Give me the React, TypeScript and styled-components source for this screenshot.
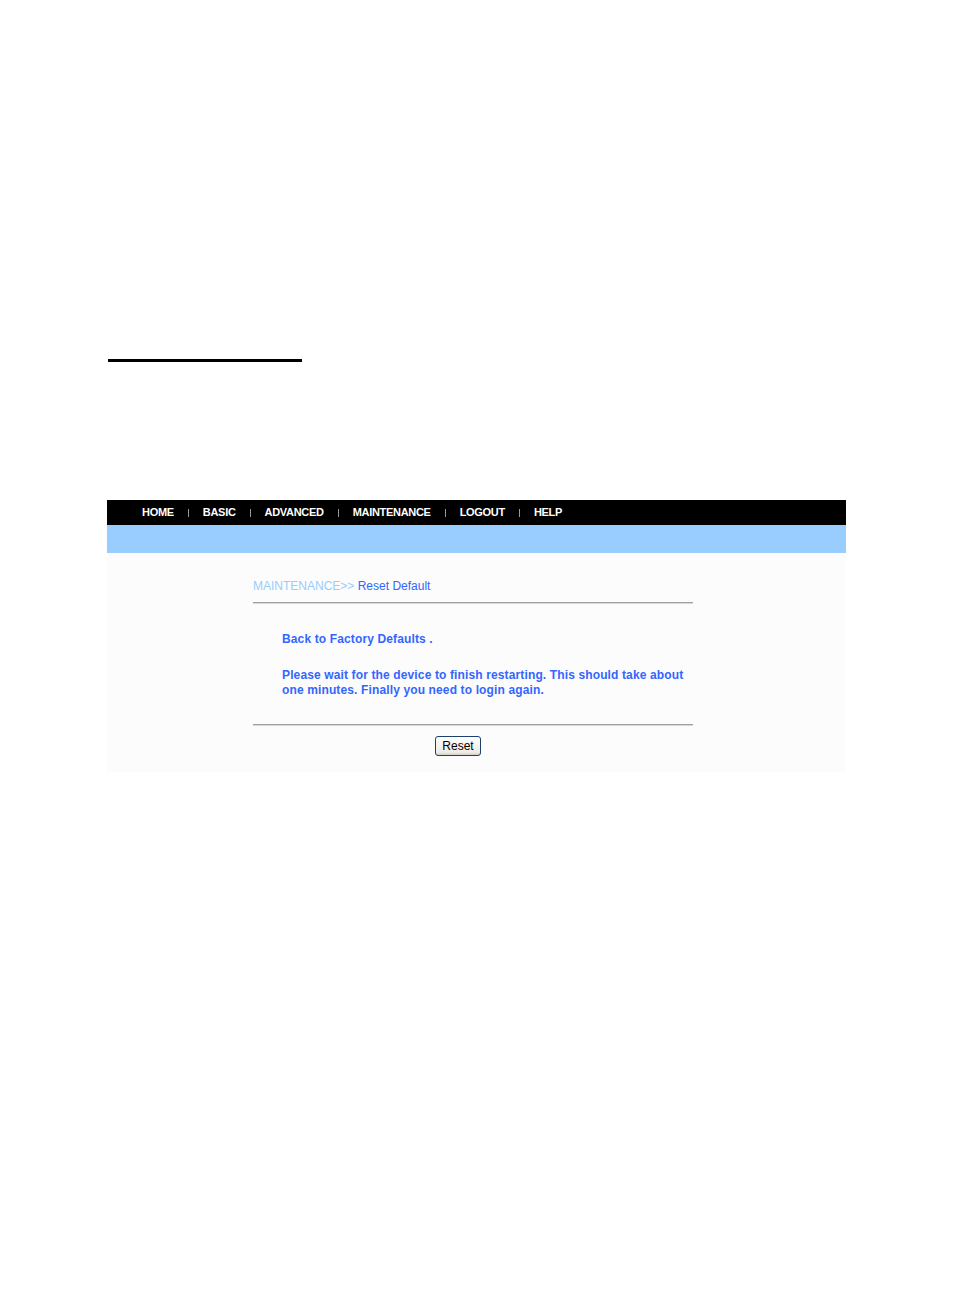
import { FunctionComponent, Fragment } from "react";
import styled, { createGlobalStyle } from "styled-components";

const GlobalStyle = createGlobalStyle`
  html, body {
    margin: 0;
    padding: 0;
    background: #ffffff;
  }
  body {
    font-family: "Liberation Sans", Arial, sans-serif;
  }
`;

const navItems = ["HOME", "BASIC", "ADVANCED", "MAINTENANCE", "LOGOUT", "HELP"];

const Page = styled.div`
  width: 954px;
  min-height: 1311px;
  padding-top: 359px;
  box-sizing: border-box;
`;

const TopRule = styled.div`
  width: 194px;
  height: 3px;
  margin-left: 108px;
  background: #000000;
`;

const Panel = styled.div`
  width: 739px;
  margin: 138px 0 0 107px;
  background: #fcfcfc;
`;

const NavBar = styled.nav`
  display: flex;
  align-items: center;
  height: 25px;
  padding-left: 35px;
  background: #000000;
`;

const NavLink = styled.a`
  color: #ffffff;
  font-size: 11px;
  font-weight: bold;
  letter-spacing: -0.3px;
  text-decoration: none;
  line-height: 25px;
`;

const NavSep = styled.span`
  width: 1px;
  height: 8px;
  margin: 0 14px;
  background: #9a9a9a;
`;

const SubBar = styled.div`
  height: 28px;
  background: #99ccff;
`;

const Content = styled.div`
  width: 440px;
  margin-left: 146px;
  padding: 26px 0 16px;
`;

const Crumb = styled.div`
  font-size: 12px;
  line-height: 14px;
  padding-bottom: 9px;
`;

const CrumbParent = styled.span`
  color: #99ccff;
`;

const CrumbCurrent = styled.span`
  color: #3366ff;
`;

const Rule = styled.div`
  height: 1px;
  background: #a0a0a0;
  border-bottom: 1px solid #d8d8d8;
`;

const Body = styled.div`
  padding: 28px 0 26px 29px;
`;

const Message = styled.p<{ $gap?: number }>`
  margin: ${({ $gap }) => $gap ?? 0}px 0 0;
  color: #3366ff;
  font-size: 12px;
  font-weight: bold;
  line-height: 15px;
  letter-spacing: 0.13px;
`;

const Actions = styled.div`
  padding: 10px 0 0 182px;
`;

const Button = styled.button`
  width: 46px;
  height: 20px;
  padding: 0;
  border: 1px solid #1f3f6f;
  border-radius: 3px;
  background: linear-gradient(#ffffff, #ecebe6 85%, #d6d0c5);
  color: #000000;
  font-family: "Liberation Sans", Arial, sans-serif;
  font-size: 12px;
  cursor: pointer;
`;

const Nav: FunctionComponent = () => (
  <NavBar>
    {navItems.map((item, i) => (
      <Fragment key={item}>
        {i > 0 && <NavSep />}
        <NavLink href="#">{item}</NavLink>
      </Fragment>
    ))}
  </NavBar>
);

export default function App() {
  return (
    <Page>
      <GlobalStyle />
      <TopRule />
      <Panel>
        <Nav />
        <SubBar />
        <Content>
          <Crumb>
            <CrumbParent>MAINTENANCE&gt;&gt;</CrumbParent>{" "}
            <CrumbCurrent>Reset Default</CrumbCurrent>
          </Crumb>
          <Rule />
          <Body>
            <Message>Back to Factory Defaults .</Message>
            <Message $gap={21}>
              Please wait for the device to finish restarting. This should take about one
              minutes. Finally you need to login again.
            </Message>
          </Body>
          <Rule />
          <Actions>
            <Button>Reset</Button>
          </Actions>
        </Content>
      </Panel>
    </Page>
  );
}
